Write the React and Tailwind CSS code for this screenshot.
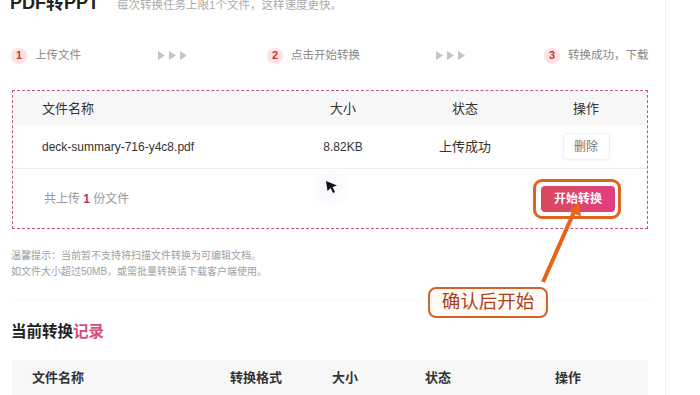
import React from "react";

function Tri() {
  return (
    <svg width="7" height="9" viewBox="0 0 7 9">
      <path d="M0 0 L7 4.5 L0 9 Z" fill="#c4c4c4" />
    </svg>
  );
}

function Arrows() {
  return (
    <div className="flex items-center gap-[4px]">
      <Tri />
      <Tri />
      <Tri />
    </div>
  );
}

function Step({ n, label }) {
  return (
    <div className="flex items-center">
      <div className="w-[16px] h-[16px] rounded-full bg-[#fce3e1] flex items-center justify-center text-[11px] font-bold text-[#c8333a] leading-none">
        {n}
      </div>
      <span className="ml-[8px] text-[11.5px] text-[#888]">{label}</span>
    </div>
  );
}

export default function App() {
  return (
    <div className="relative w-[700px] h-[395px] overflow-hidden bg-white font-['Liberation_Sans','Noto_Sans_CJK_SC',sans-serif]">
      <div className="w-[666px] h-full border-r border-[#efefef] flex flex-col">
        {/* title */}
        <div className="-mt-[9px] h-[24px] flex items-baseline pl-[10px]">
          <span className="text-[18px] leading-[24px] font-bold text-[#222]">PDF转PPT</span>
          <span className="ml-[18px] text-[11.5px] text-[#aaa]">每次转换任务上限1个文件，这样速度更快。</span>
        </div>

        {/* steps */}
        <div className="mt-[32px] h-[20px] flex items-center pl-[11px]">
          <div className="w-[147px]">
            <Step n="1" label="上传文件" />
          </div>
          <div className="w-[109px]">
            <Arrows />
          </div>
          <div className="w-[169px]">
            <Step n="2" label="点击开始转换" />
          </div>
          <div className="w-[108px]">
            <Arrows />
          </div>
          <div>
            <Step n="3" label="转换成功，下载" />
          </div>
        </div>

        {/* upload box */}
        <div className="mt-[26px] ml-[12px] w-[636px] border border-dashed border-[#c65570]">
          <div className="h-[34px] bg-[#f7f7f7] flex items-center text-[13px] text-[#333] pr-[9px]">
            <div className="w-[277px] pl-[29px]">文件名称</div>
            <div className="w-[106px] text-center">大小</div>
            <div className="w-[138px] text-center">状态</div>
            <div className="w-[104px] text-center">操作</div>
          </div>
          <div className="h-[44px] flex items-center text-[13px] text-[#333] pr-[9px] border-b border-[#eeeeee]">
            <div className="w-[277px] pl-[29px] text-[12px]">deck-summary-716-y4c8.pdf</div>
            <div className="w-[106px] text-center text-[12px]">8.82KB</div>
            <div className="w-[138px] text-center">上传成功</div>
            <div className="w-[104px] flex justify-center">
              <div className="w-[47px] h-[27px] rounded-[3px] border border-[#f0f0f0] shadow-[0_1px_2px_rgba(0,0,0,0.04)] flex items-center justify-center text-[12px] text-[#777]">
                删除
              </div>
            </div>
          </div>
          <div className="h-[59px] flex items-center justify-between pl-[31px] pr-[32px]">
            <div className="text-[12px] text-[#999]">
              共上传 <span className="font-bold text-[#c8304c]">1</span> 份文件
            </div>
            <div className="relative">
              <div className="w-[74px] h-[26px] rounded-[4px] bg-gradient-to-r from-[#d8495a] to-[#e23d82] flex items-center justify-center text-[12px] font-bold text-white">
                开始转换
              </div>
              <div className="absolute -left-[8px] -right-[6px] -top-[7px] -bottom-[7px] rounded-[9px] border-[3px] border-[#e0621c]" />
            </div>
          </div>
        </div>

        {/* tips */}
        <div className="mt-[19px] pl-[11px] text-[10px] leading-[16px] text-[#a0a0a0]">
          <div>温馨提示：当前暂不支持将扫描文件转换为可编辑文档。</div>
          <div>如文件大小超过50MB，或需批量转换请下载客户端使用。</div>
        </div>

        <div className="mt-[19px] ml-[10px] w-[645px] h-px bg-[#f9f9f9]" />

        <div className="mt-[21px] pl-[11px] text-[15.5px] font-bold text-[#222] leading-[22px]">
          当前转换<span className="text-[#d94b7b]">记录</span>
        </div>

        <div className="mt-[17px] ml-[12px] w-[636px] h-[40px] bg-[#f7f7f7] flex items-center text-[13px] font-bold text-[#333]">
          <div className="w-[218px] pl-[20px]">文件名称</div>
          <div className="w-[102px]">转换格式</div>
          <div className="w-[93px]">大小</div>
          <div className="w-[130px]">状态</div>
          <div>操作</div>
        </div>
      </div>

      {/* cursor */}
      <div className="absolute left-[312px] top-[170px] w-[36px] h-[36px] rounded-full bg-[radial-gradient(circle,rgba(120,140,220,0.07),rgba(255,255,255,0))]" />
      <svg className="absolute left-[325px] top-[180px]" width="14" height="14" viewBox="0 0 14 14">
        <path d="M1 1 L12 5.5 L7.5 7 L10 12 L8 13 L5.6 8 L2.5 11 Z" fill="#111" />
      </svg>

      {/* annotation arrow */}
      <svg className="absolute left-0 top-0" width="700" height="395" viewBox="0 0 700 395">
        <line x1="543" y1="282" x2="574" y2="212" stroke="#e8621a" strokeWidth="4" />
        <path d="M578.5 202 L581 216.5 L568.5 211 Z" fill="#e8621a" />
      </svg>

      {/* callout */}
      <div className="absolute left-[428px] top-[287px] w-[120px] h-[31px] rounded-[8px] border-2 border-[#d0652c] bg-[#fffaf3] flex items-center justify-center text-[18.5px] text-[#a8421c] leading-none">
        确认后开始
      </div>
    </div>
  );
}
